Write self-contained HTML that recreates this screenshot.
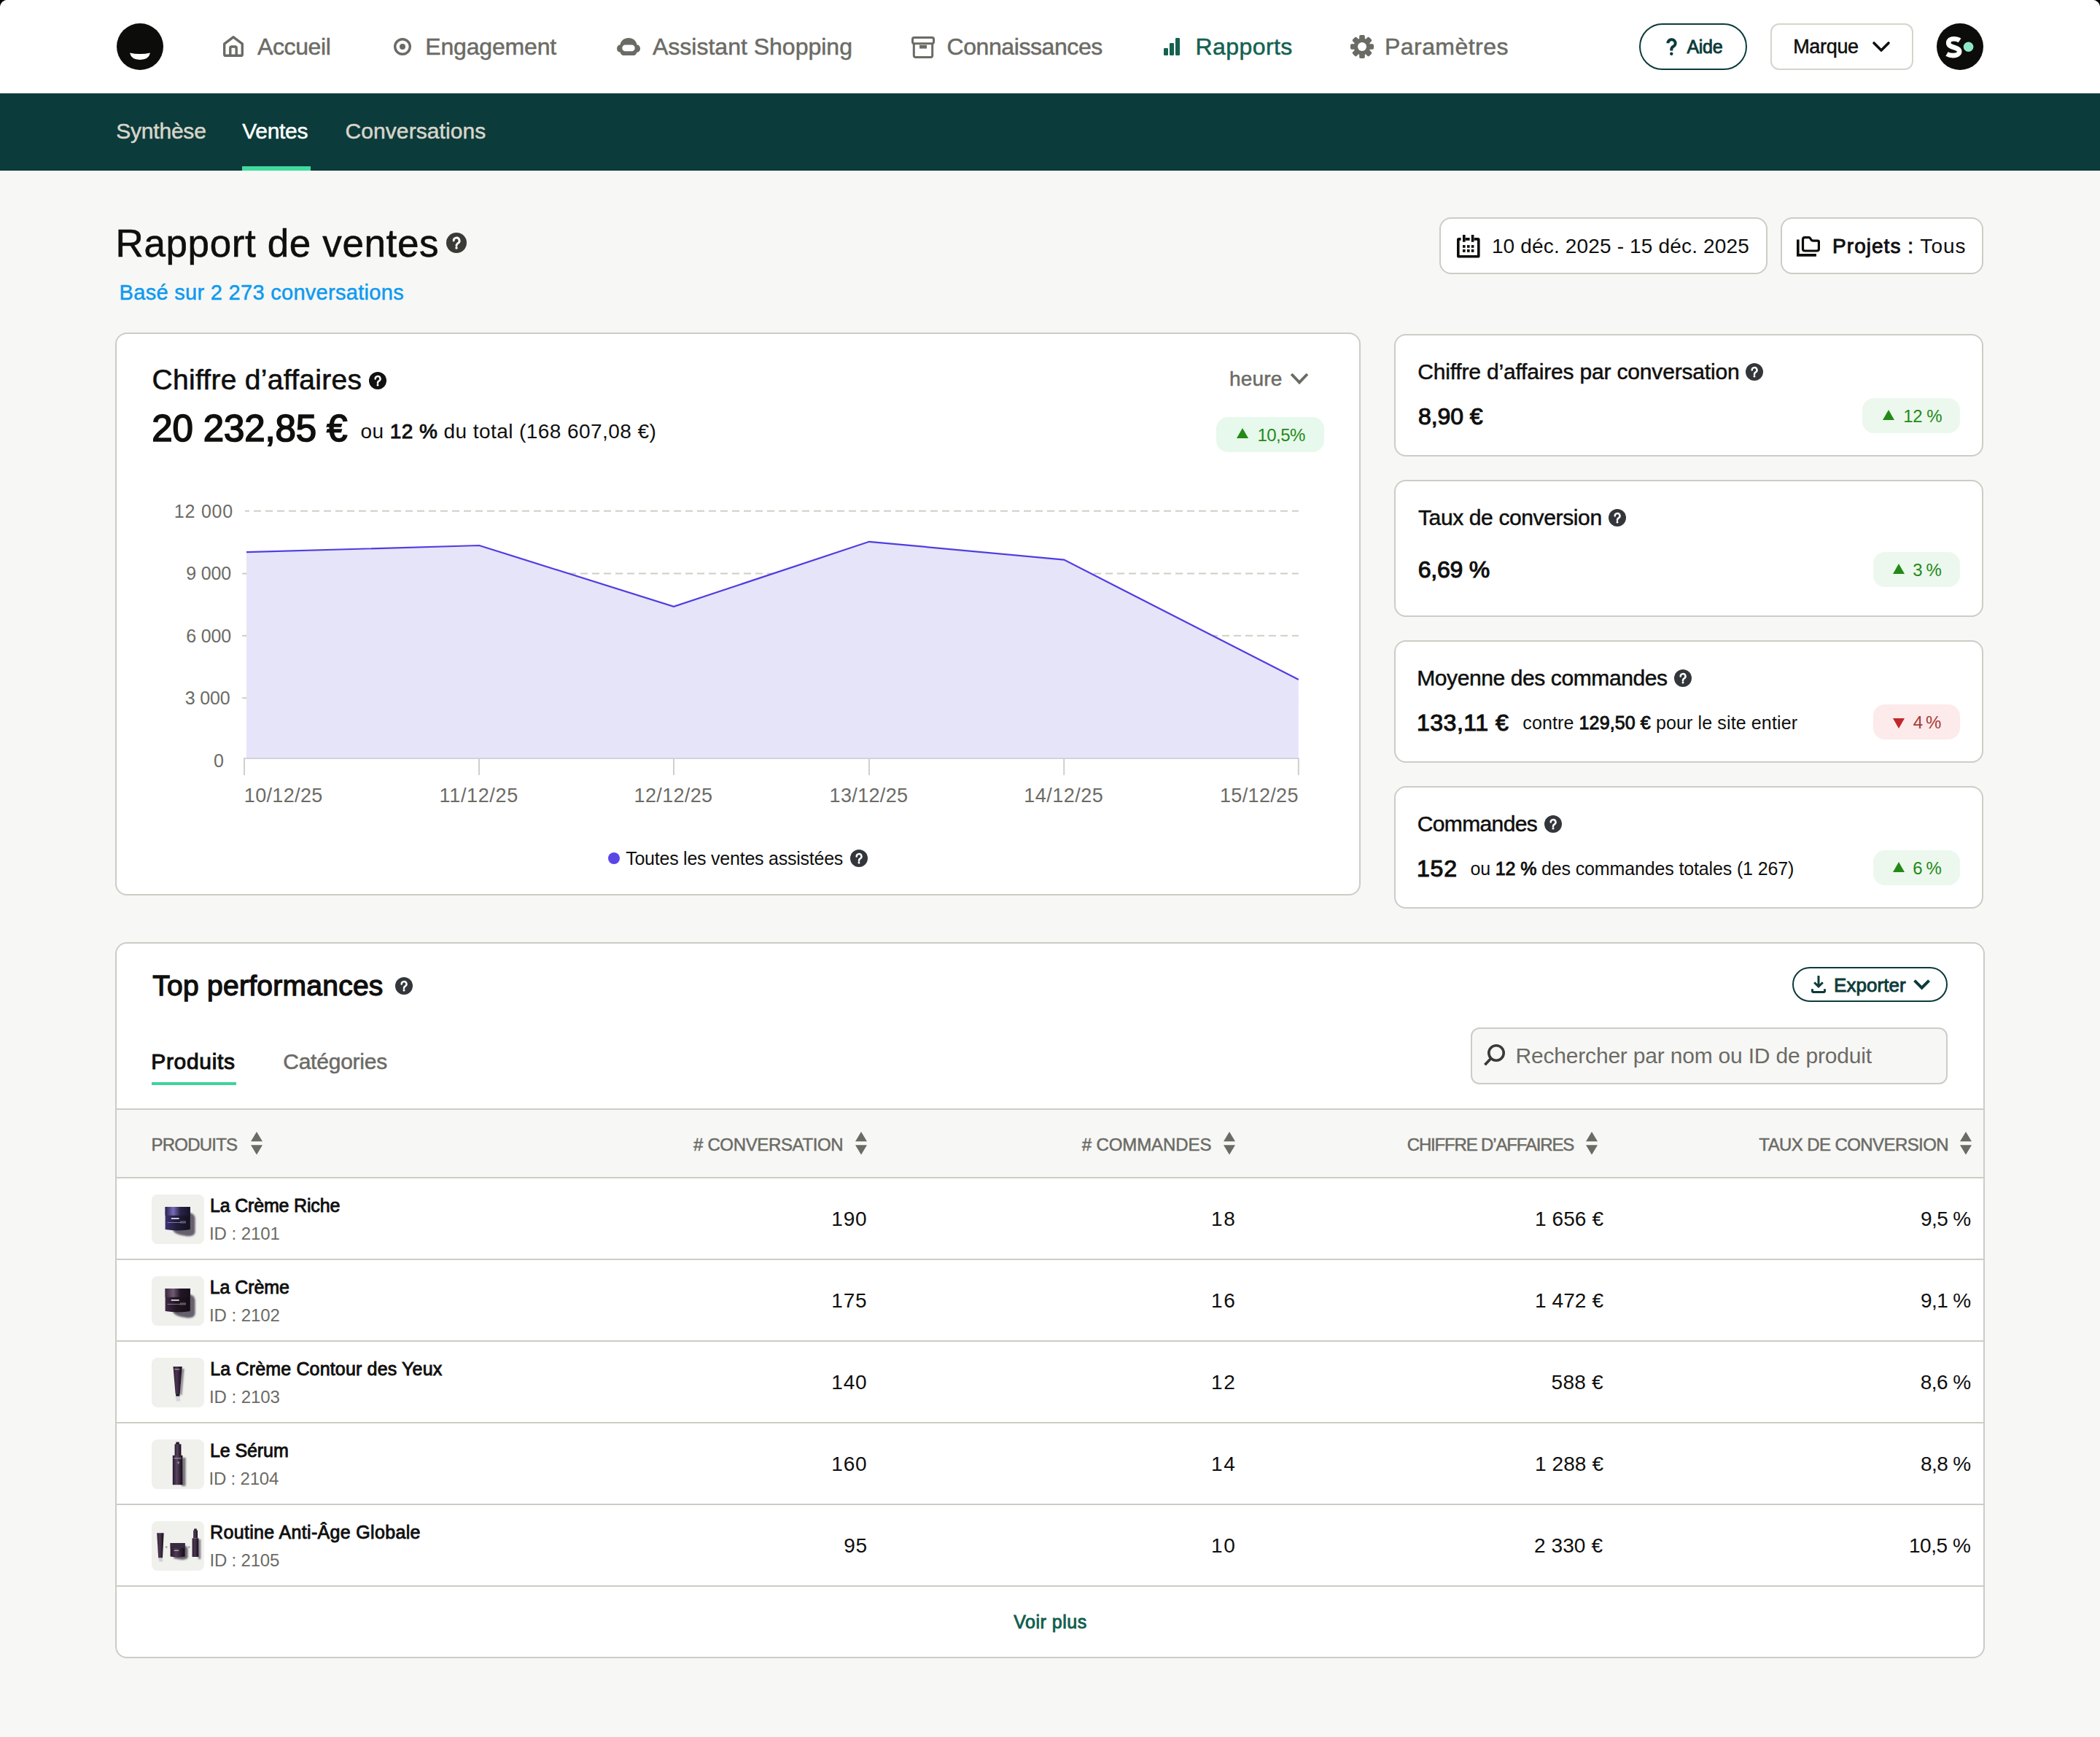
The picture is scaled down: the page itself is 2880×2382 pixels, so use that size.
<!DOCTYPE html>
<html><head><meta charset="utf-8"><title>Rapport de ventes</title>
<style>
html,body{margin:0;padding:0;background:#000;overflow:hidden;}
#root{position:relative;width:1440px;height:1191px;zoom:2;background:#f7f7f5;overflow:hidden;border-radius:5px 5px 0 0;font-family:"Liberation Sans",sans-serif;}
@media (max-width:2000px){#root{zoom:1;}}
.t{position:absolute;line-height:1;white-space:nowrap;}
.b{position:absolute;}
.i{position:absolute;overflow:visible;}
b{font-weight:400;-webkit-text-stroke:.45px currentColor;}
</style></head><body><div id="root">
<div class="b" style="left:0px;top:0px;width:1440px;height:64px;background:#fff;"></div>
<svg class="i" style="left:80px;top:16px;width:32px;height:32px;" viewBox="0 0 32 32"><circle cx="16" cy="16" r="16" fill="#0c0c0a"/><path d="M9 20.3 Q16 21.8 23 20.3 Q22 25 16 25 Q10 25 9 20.3Z" fill="#fff"/></svg>
<svg class="i" style="left:153px;top:24.5px;width:14px;height:14.5px;" viewBox="0 0 14 14.5"><g fill="none" stroke="#6b6b65" stroke-width="1.7" stroke-linejoin="round"><path d="M7 0.9 L0.85 5.6 V12.7 Q0.85 13.65 1.8 13.65 H12.2 Q13.15 13.65 13.15 12.7 V5.6 Z"/><path d="M4.9 13.6 V8.4 Q4.9 7.5 5.8 7.5 H8.2 Q9.1 7.5 9.1 8.4 V13.6"/></g></svg>
<svg class="i" style="left:270px;top:26px;width:12px;height:12px;" viewBox="0 0 12 12"><circle cx="6" cy="6" r="5.15" fill="none" stroke="#6b6b65" stroke-width="1.7"/><circle cx="6" cy="6" r="2" fill="#6b6b65"/></svg>
<svg class="i" style="left:423px;top:26px;width:16px;height:12px;" viewBox="0 0 16 12"><path fill="#6b6b65" fill-rule="evenodd" d="M2.2 4.8 C2.7 1.8 5 0 8 0 C11 0 13.3 1.8 13.8 4.8 H13.9 A2.1 2.55 0 0 1 13.9 9.9 H13.7 C13.4 11.2 12.6 12 11.5 12 H4.5 C3.4 12 2.6 11.2 2.3 9.9 H2.1 A2.1 2.55 0 0 1 2.1 4.8 Z M5.8 4.8 H10.2 A2.15 2.15 0 0 1 10.2 9.1 H5.8 A2.15 2.15 0 0 1 5.8 4.8 Z"/></svg>
<svg class="i" style="left:625px;top:25px;width:16px;height:15px;" viewBox="0 0 16 15"><g fill="none" stroke="#6b6b65" stroke-width="1.5"><rect x="0.75" y="0.75" width="14.5" height="4.1" rx="1.1"/><path d="M1.65 4.85 V13 Q1.65 14.25 2.9 14.25 H13.1 Q14.35 14.25 14.35 13 V4.85"/></g><rect x="5.5" y="5.9" width="5" height="2.4" fill="#6b6b65"/></svg>
<svg class="i" style="left:798px;top:26px;width:11px;height:12px;" viewBox="0 0 11 12"><g fill="#14614f"><rect x="0" y="7" width="3" height="5" rx=".6"/><rect x="4" y="3.5" width="3" height="8.5" rx=".6"/><rect x="8" y="0" width="3" height="12" rx=".6"/></g></svg>
<svg class="i" style="left:926px;top:24px;width:16px;height:16px;" viewBox="0 0 16 16"><g fill="#6b6b65"><rect x="6.1" y="0" width="3.8" height="4" rx="0.9" transform="rotate(0 8 8)"/><rect x="6.1" y="0" width="3.8" height="4" rx="0.9" transform="rotate(45 8 8)"/><rect x="6.1" y="0" width="3.8" height="4" rx="0.9" transform="rotate(90 8 8)"/><rect x="6.1" y="0" width="3.8" height="4" rx="0.9" transform="rotate(135 8 8)"/><rect x="6.1" y="0" width="3.8" height="4" rx="0.9" transform="rotate(180 8 8)"/><rect x="6.1" y="0" width="3.8" height="4" rx="0.9" transform="rotate(225 8 8)"/><rect x="6.1" y="0" width="3.8" height="4" rx="0.9" transform="rotate(270 8 8)"/><rect x="6.1" y="0" width="3.8" height="4" rx="0.9" transform="rotate(315 8 8)"/><circle cx="8" cy="8" r="5.7"/></g><circle cx="8" cy="8" r="3" fill="#fff"/></svg>
<div class="t" id="n1" style="top:23.96px;font-size:16px;color:#6b6b65;letter-spacing:-0.179px;left:176.45px;-webkit-text-stroke:0.25px currentColor;">Accueil</div>
<div class="t" id="n2" style="top:23.96px;font-size:16px;color:#6b6b65;letter-spacing:-0.083px;left:291.62px;-webkit-text-stroke:0.25px currentColor;">Engagement</div>
<div class="t" id="n3" style="top:23.96px;font-size:16px;color:#6b6b65;left:447.50px;-webkit-text-stroke:0.25px currentColor;">Assistant Shopping</div>
<div class="t" id="n4" style="top:23.96px;font-size:16px;color:#6b6b65;letter-spacing:-0.208px;left:649.25px;-webkit-text-stroke:0.25px currentColor;">Connaissances</div>
<div class="t" id="n5" style="top:23.96px;font-size:16px;color:#14614f;letter-spacing:0.214px;left:819.75px;-webkit-text-stroke:0.25px currentColor;">Rapports</div>
<div class="t" id="n6" style="top:23.96px;font-size:16px;color:#6b6b65;letter-spacing:0.222px;left:949.50px;-webkit-text-stroke:0.25px currentColor;">Paramètres</div>
<div class="b" style="left:1124px;top:16px;width:74px;height:32px;box-sizing:border-box;border:1px solid #0b3b3a;border-radius:16px;background:#fff;"></div>
<svg class="i" style="left:1142.3px;top:26px;width:7.3px;height:12px;" viewBox="0 0 7.3 12"><path d="M1.2 3.6 A2.55 2.55 0 1 1 4.9 5.9 Q3.65 6.6 3.65 7.9 V8.8" fill="none" stroke="#0b3b3a" stroke-width="2"/><circle cx="3.65" cy="10.9" r="1.1" fill="#0b3b3a"/></svg>
<div class="t" id="aide" style="top:25.82px;font-size:12.5px;color:#0b3b3a;-webkit-text-stroke:0.43px currentColor;letter-spacing:-0.129px;left:1156.70px;">Aide</div>
<div class="b" style="left:1214px;top:16px;width:98px;height:32px;box-sizing:border-box;border:1px solid #d5d4cc;border-radius:6px;background:#fff;"></div>
<div class="t" id="marque" style="top:25.37px;font-size:13.5px;color:#0f0f0e;letter-spacing:-0.16px;left:1229.60px;-webkit-text-stroke:0.25px currentColor;">Marque</div>
<svg class="i" style="left:1284px;top:28.5px;width:12px;height:7px;" viewBox="0 0 12 7"><path d="M1 1 L6 6 L11 1" fill="none" stroke="#0f0f0e" stroke-width="1.8" stroke-linecap="round" stroke-linejoin="round"/></svg>
<svg class="i" style="left:1328px;top:16px;width:32px;height:32px;" viewBox="0 0 32 32"><circle cx="16" cy="16" r="16" fill="#0c0c0a"/><path d="M15.8 11.7 C14.7 10.95 13.1 10.65 11.7 10.65 C9.7 10.65 8.1 11.6 8.1 13.5 C8.1 17.1 15.6 15.9 15.6 19.3 C15.6 21.1 13.7 22.05 11.3 22.05 C9.8 22.05 8.2 21.7 7 21" fill="none" stroke="#fff" stroke-width="3.3"/><circle cx="21.8" cy="16.1" r="3.4" fill="#8fe8c5"/></svg>
<div class="b" style="left:0px;top:64px;width:1440px;height:53px;background:#0b3b3a;"></div>
<div class="t" id="s1" style="top:82.60px;font-size:15px;color:#d8d5cb;letter-spacing:-0.107px;left:79.62px;-webkit-text-stroke:0.25px currentColor;">Synthèse</div>
<div class="t" id="s2" style="top:82.60px;font-size:15px;color:#ffffff;letter-spacing:-0.15px;left:166.12px;-webkit-text-stroke:0.25px currentColor;">Ventes</div>
<div class="t" id="s3" style="top:82.60px;font-size:15px;color:#d8d5cb;letter-spacing:0.042px;left:236.75px;-webkit-text-stroke:0.25px currentColor;">Conversations</div>
<div class="b" style="left:166px;top:114px;width:47px;height:3px;background:#3fdc9e;"></div>
<div class="t" id="title" style="top:153.57px;font-size:26.5px;color:#0f0f0e;letter-spacing:0.31px;left:79.25px;-webkit-text-stroke:0.3px currentColor;">Rapport de ventes</div>
<svg class="i" style="left:306px;top:159.6px;width:14px;height:14px;" viewBox="0 0 12 12"><circle cx="6" cy="6" r="6" fill="#3a3a36"/><path d="M4.35 4.75a1.7 1.7 0 1 1 2.55 1.45c-.55.33-.9.62-.9 1.25v.25" fill="none" stroke="#fff" stroke-width="1.25" stroke-linecap="round"/><circle cx="6" cy="9.05" r=".75" fill="#fff"/></svg>
<div class="t" id="sub" style="top:193.43px;font-size:14.5px;color:#0d9af0;letter-spacing:0.148px;left:81.80px;-webkit-text-stroke:0.25px currentColor;">Basé sur 2 273 conversations</div>
<div class="b" style="left:987px;top:149px;width:225px;height:39px;box-sizing:border-box;border:1px solid #cdccc5;border-radius:8px;background:#fff;"></div>
<svg class="i" style="left:999px;top:161px;width:16px;height:16px;" viewBox="0 0 16 16"><g fill="#0c0c0a"><path d="M0 3.3 Q0 2 1.3 2 H2.8 V3.9 H1.8 V14 H14 V3.9 H11.8 V2 H14.5 Q15.8 2 15.8 3.3 V14.5 Q15.8 15.8 14.5 15.8 H1.3 Q0 15.8 0 14.5 Z"/><rect x="4" y="0" width="1.8" height="4.9"/><rect x="9.9" y="0" width="1.8" height="4.9"/><rect x="5.8" y="2" width="3" height="1.9"/><rect x="4" y="7.05" width="1.8" height="1.85"/><rect x="7" y="7.05" width="1.8" height="1.85"/><rect x="9.9" y="7.05" width="1.8" height="1.85"/><rect x="4" y="10" width="1.8" height="1.9"/><rect x="7" y="10" width="1.8" height="1.9"/><rect x="9.9" y="10" width="1.8" height="1.9"/></g></svg>
<div class="t" id="date" style="top:162.15px;font-size:14px;color:#0f0f0e;letter-spacing:0.081px;left:1022.95px;">10 déc. 2025 - 15 déc. 2025</div>
<div class="b" style="left:1221px;top:149px;width:139px;height:39px;box-sizing:border-box;border:1px solid #cdccc5;border-radius:8px;background:#fff;"></div>
<svg class="i" style="left:1232px;top:162px;width:16px;height:14px;" viewBox="0 0 16 14"><path d="M4.25 2.2 Q4.25 0.8 5.65 0.8 H8.3 Q9 0.8 9.4 1.5 L9.9 2.3 Q10.4 3.1 11.3 3.1 H14.4 Q15.2 3.1 15.2 3.9 V8.6 Q15.2 10 13.8 10 H5.65 Q4.25 10 4.25 8.6 Z" fill="none" stroke="#0c0c0a" stroke-width="1.6"/><path d="M0 2.2 H1.8 V12 H13.45 V13.9 H0 Z" fill="#0c0c0a"/></svg>
<div class="t" id="proj" style="top:162.15px;font-size:14px;color:#0f0f0e;letter-spacing:0.514px;left:1256.55px;"><b>Projets :</b> Tous</div>
<div class="b" style="left:79px;top:228px;width:854px;height:386px;box-sizing:border-box;border:1px solid #cdccc5;border-radius:8px;background:#fff;"></div>
<div class="t" id="ca" style="top:250.39px;font-size:19.5px;color:#0f0f0e;letter-spacing:0.147px;left:104.25px;-webkit-text-stroke:0.3px currentColor;">Chiffre d’affaires</div>
<svg class="i" style="left:253px;top:255px;width:12px;height:12px;" viewBox="0 0 12 12"><circle cx="6" cy="6" r="6" fill="#111"/><path d="M4.35 4.75a1.7 1.7 0 1 1 2.55 1.45c-.55.33-.9.62-.9 1.25v.25" fill="none" stroke="#fff" stroke-width="1.25" stroke-linecap="round"/><circle cx="6" cy="9.05" r=".75" fill="#fff"/></svg>
<div class="t" id="caval" style="top:280.91px;font-size:25.5px;color:#0f0f0e;-webkit-text-stroke:0.87px currentColor;letter-spacing:-0.07px;left:104.15px;">20 232,85 €</div>
<div class="t" id="catot" style="top:289.15px;font-size:14px;color:#0f0f0e;letter-spacing:0.217px;left:247.25px;">ou <b>12 %</b> du total (168 607,08 €)</div>
<div class="t" id="heure" style="top:253.15px;font-size:14px;color:#6b6b65;letter-spacing:0.1px;left:843.00px;-webkit-text-stroke:0.25px currentColor;">heure</div>
<svg class="i" style="left:885px;top:256px;width:12px;height:8px;" viewBox="0 0 12 8"><path d="M1.2 1.2 L6 6.2 L10.8 1.2" fill="none" stroke="#6b6b65" stroke-width="1.9" stroke-linecap="square"/></svg>
<div class="b" style="left:834px;top:286px;width:74px;height:24px;background:#e7f8ec;border-radius:8px;"></div>
<svg class="i" style="left:848px;top:293.7px;width:8px;height:7px;" viewBox="0 0 8 7"><path d="M4 0 L8 7 H0Z" fill="#238a17"/></svg>
<div class="t" id="b1" style="top:292.34px;font-size:12px;color:#238a17;letter-spacing:-0.275px;left:862.25px;">10,5%</div>
<svg class="i" style="left:0;top:0;width:1440px;height:700px" viewBox="0 0 1440 700"><line x1="168" y1="350.4" x2="890.4" y2="350.4" stroke="#cfcec6" stroke-width="1" stroke-dasharray="5 3" stroke-dashoffset="2"/><line x1="168" y1="393.3" x2="890.4" y2="393.3" stroke="#cfcec6" stroke-width="1" stroke-dasharray="5 3" stroke-dashoffset="2"/><line x1="168" y1="435.9" x2="890.4" y2="435.9" stroke="#cfcec6" stroke-width="1" stroke-dasharray="5 3" stroke-dashoffset="2"/><line x1="168" y1="478.6" x2="890.4" y2="478.6" stroke="#cfcec6" stroke-width="1" stroke-dasharray="5 3" stroke-dashoffset="2"/><polygon points="169,520 169,378.6 328.6,374 462,415.9 596,371.4 729.6,383.8 890.4,466 890.4,520" fill="#e6e4f8"/><polyline points="169,378.6 328.6,374 462,415.9 596,371.4 729.6,383.8 890.4,466" fill="none" stroke="#4f3de2" stroke-width="1.1"/><line x1="167" y1="520" x2="890.9" y2="520" stroke="#d2d2de" stroke-width="1"/><line x1="167.5" y1="520.5" x2="167.5" y2="531.5" stroke="#d0cfc8" stroke-width="1"/><line x1="328.5" y1="520.5" x2="328.5" y2="531.5" stroke="#d0cfc8" stroke-width="1"/><line x1="462" y1="520.5" x2="462" y2="531.5" stroke="#d0cfc8" stroke-width="1"/><line x1="596" y1="520.5" x2="596" y2="531.5" stroke="#d0cfc8" stroke-width="1"/><line x1="729.6" y1="520.5" x2="729.6" y2="531.5" stroke="#d0cfc8" stroke-width="1"/><line x1="890.4" y1="520.5" x2="890.4" y2="531.5" stroke="#d0cfc8" stroke-width="1"/><line x1="166" y1="393.3" x2="169" y2="393.3" stroke="#d0cfc8" stroke-width="1"/><line x1="166" y1="435.9" x2="169" y2="435.9" stroke="#d0cfc8" stroke-width="1"/><line x1="166" y1="478.6" x2="169" y2="478.6" stroke="#d0cfc8" stroke-width="1"/></svg>
<div class="t" id="y1" style="top:344.42px;font-size:12.5px;color:#6b6b65;letter-spacing:0.4px;right:1280.00px;">12 000</div>
<div class="t" id="t137cb48a" style="top:387.02px;font-size:12.5px;color:#6b6b65;letter-spacing:-0.075px;right:1281.45px;">9 000</div>
<div class="t" id="t565c6882" style="top:429.82px;font-size:12.5px;color:#6b6b65;letter-spacing:-0.075px;right:1281.45px;">6 000</div>
<div class="t" id="t5d8c16ff" style="top:472.52px;font-size:12.5px;color:#6b6b65;letter-spacing:-0.075px;right:1282.25px;">3 000</div>
<div class="t" id="t58d83ec4" style="top:515.32px;font-size:12.5px;color:#6b6b65;right:1286.50px;">0</div>
<div class="t" id="x1" style="top:539.07px;font-size:13.5px;color:#6b6b65;letter-spacing:0.172px;left:167.40px;">10/12/25</div>
<div class="t" id="t9c1f817a" style="top:539.07px;font-size:13.5px;color:#6b6b65;letter-spacing:0.318px;left:328.35px;transform:translateX(-50%);">11/12/25</div>
<div class="t" id="t65c3688e" style="top:539.07px;font-size:13.5px;color:#6b6b65;letter-spacing:0.176px;left:461.75px;transform:translateX(-50%);">12/12/25</div>
<div class="t" id="te7cf4b01" style="top:539.07px;font-size:13.5px;color:#6b6b65;letter-spacing:0.176px;left:595.75px;transform:translateX(-50%);">13/12/25</div>
<div class="t" id="td51dcc60" style="top:539.07px;font-size:13.5px;color:#6b6b65;letter-spacing:0.245px;left:729.40px;transform:translateX(-50%);">14/12/25</div>
<div class="t" id="t55d1722b" style="top:539.07px;font-size:13.5px;color:#6b6b65;letter-spacing:0.171px;right:549.60px;">15/12/25</div>
<div class="b" style="left:417px;top:584.4px;width:8px;height:8px;background:#5a46e6;border-radius:50%;"></div>
<div class="t" id="leg" style="top:582.72px;font-size:12.5px;color:#0f0f0e;letter-spacing:-0.119px;left:429.10px;">Toutes les ventes assistées</div>
<svg class="i" style="left:583px;top:582.5px;width:12px;height:12px;" viewBox="0 0 12 12"><circle cx="6" cy="6" r="6" fill="#33363b"/><path d="M4.35 4.75a1.7 1.7 0 1 1 2.55 1.45c-.55.33-.9.62-.9 1.25v.25" fill="none" stroke="#fff" stroke-width="1.25" stroke-linecap="round"/><circle cx="6" cy="9.05" r=".75" fill="#fff"/></svg>
<div class="b" style="left:956px;top:229px;width:404px;height:84px;box-sizing:border-box;border:1px solid #cdccc5;border-radius:8px;background:#fff;"></div>
<div class="t" id="ta4232cba" style="top:247.70px;font-size:15px;color:#0f0f0e;letter-spacing:-0.088px;left:972.10px;-webkit-text-stroke:0.25px currentColor;">Chiffre d’affaires par conversation</div>
<svg class="i" style="left:1197.2px;top:249.2px;width:12px;height:12px;" viewBox="0 0 12 12"><circle cx="6" cy="6" r="6" fill="#33363b"/><path d="M4.35 4.75a1.7 1.7 0 1 1 2.55 1.45c-.55.33-.9.62-.9 1.25v.25" fill="none" stroke="#fff" stroke-width="1.25" stroke-linecap="round"/><circle cx="6" cy="9.05" r=".75" fill="#fff"/></svg>
<div class="t" id="t24fc202e" style="top:277.46px;font-size:16px;color:#0f0f0e;-webkit-text-stroke:0.54px currentColor;letter-spacing:-0.04px;left:972.50px;">8,90 €</div>
<div class="b" style="left:1277px;top:273px;width:67px;height:24px;background:#ecf8ee;border-radius:8px;"></div>
<svg class="i" style="left:1291px;top:281px;width:8px;height:7px;" viewBox="0 0 8 7"><path d="M4 0 L8 7 H0Z" fill="#238a17"/></svg>
<div class="t" id="t31ce87d0" style="top:279.44px;font-size:12px;color:#238a17;letter-spacing:-0.204px;left:1305.10px;">12 %</div>
<div class="b" style="left:956px;top:329px;width:404px;height:94px;box-sizing:border-box;border:1px solid #cdccc5;border-radius:8px;background:#fff;"></div>
<div class="t" id="t11be38d4" style="top:347.70px;font-size:15px;color:#0f0f0e;letter-spacing:-0.189px;left:972.50px;-webkit-text-stroke:0.25px currentColor;">Taux de conversion</div>
<svg class="i" style="left:1103px;top:349.2px;width:12px;height:12px;" viewBox="0 0 12 12"><circle cx="6" cy="6" r="6" fill="#33363b"/><path d="M4.35 4.75a1.7 1.7 0 1 1 2.55 1.45c-.55.33-.9.62-.9 1.25v.25" fill="none" stroke="#fff" stroke-width="1.25" stroke-linecap="round"/><circle cx="6" cy="9.05" r=".75" fill="#fff"/></svg>
<div class="t" id="t1318b4bb" style="top:382.46px;font-size:16px;color:#0f0f0e;-webkit-text-stroke:0.54px currentColor;letter-spacing:-0.1px;left:972.35px;">6,69 %</div>
<div class="b" style="left:1284.4px;top:378.4px;width:59.6px;height:24px;background:#ecf8ee;border-radius:8px;"></div>
<svg class="i" style="left:1298px;top:386.4px;width:8px;height:7px;" viewBox="0 0 8 7"><path d="M4 0 L8 7 H0Z" fill="#238a17"/></svg>
<div class="t" id="t727fd282" style="top:384.84px;font-size:12px;color:#238a17;letter-spacing:-0.4px;left:1311.60px;">3 %</div>
<div class="b" style="left:956px;top:439px;width:404px;height:84px;box-sizing:border-box;border:1px solid #cdccc5;border-radius:8px;background:#fff;"></div>
<div class="t" id="t9376543f" style="top:457.70px;font-size:15px;color:#0f0f0e;letter-spacing:-0.2px;left:971.60px;-webkit-text-stroke:0.25px currentColor;">Moyenne des commandes</div>
<svg class="i" style="left:1148px;top:459.2px;width:12px;height:12px;" viewBox="0 0 12 12"><circle cx="6" cy="6" r="6" fill="#33363b"/><path d="M4.35 4.75a1.7 1.7 0 1 1 2.55 1.45c-.55.33-.9.62-.9 1.25v.25" fill="none" stroke="#fff" stroke-width="1.25" stroke-linecap="round"/><circle cx="6" cy="9.05" r=".75" fill="#fff"/></svg>
<div class="t" id="t6aae65fb" style="top:487.46px;font-size:16px;color:#0f0f0e;-webkit-text-stroke:0.54px currentColor;letter-spacing:0.256px;left:971.50px;">133,11 €</div>
<div class="t" id="t94867053" style="top:489.42px;font-size:12.5px;color:#0f0f0e;letter-spacing:0.062px;left:1044.15px;">contre <b>129,50 €</b> pour le site entier</div>
<div class="b" style="left:1284.4px;top:483px;width:59.6px;height:24px;background:#fdeaea;border-radius:8px;"></div>
<svg class="i" style="left:1298px;top:492.6px;width:8px;height:7px;" viewBox="0 0 8 7"><path d="M0 0 H8 L4 7Z" fill="#c0282a"/></svg>
<div class="t" id="taf74cc3e" style="top:489.44px;font-size:12px;color:#a83a3a;letter-spacing:-0.65px;left:1311.85px;">4 %</div>
<div class="b" style="left:956px;top:539px;width:404px;height:84px;box-sizing:border-box;border:1px solid #cdccc5;border-radius:8px;background:#fff;"></div>
<div class="t" id="ta5db2e19" style="top:557.70px;font-size:15px;color:#0f0f0e;letter-spacing:-0.308px;left:971.85px;-webkit-text-stroke:0.25px currentColor;">Commandes</div>
<svg class="i" style="left:1059px;top:559.1999999999999px;width:12px;height:12px;" viewBox="0 0 12 12"><circle cx="6" cy="6" r="6" fill="#33363b"/><path d="M4.35 4.75a1.7 1.7 0 1 1 2.55 1.45c-.55.33-.9.62-.9 1.25v.25" fill="none" stroke="#fff" stroke-width="1.25" stroke-linecap="round"/><circle cx="6" cy="9.05" r=".75" fill="#fff"/></svg>
<div class="t" id="tdd738dce" style="top:587.46px;font-size:16px;color:#0f0f0e;-webkit-text-stroke:0.54px currentColor;letter-spacing:0.4px;left:971.50px;">152</div>
<div class="t" id="t811cad77" style="top:589.42px;font-size:12.5px;color:#0f0f0e;letter-spacing:-0.071px;left:1008.25px;">ou <b>12 %</b> des commandes totales (1 267)</div>
<div class="b" style="left:1284.4px;top:583px;width:59.6px;height:24px;background:#ecf8ee;border-radius:8px;"></div>
<svg class="i" style="left:1298px;top:591px;width:8px;height:7px;" viewBox="0 0 8 7"><path d="M4 0 L8 7 H0Z" fill="#238a17"/></svg>
<div class="t" id="t14308f46" style="top:589.44px;font-size:12px;color:#238a17;letter-spacing:-0.4px;left:1311.60px;">6 %</div>
<div class="b" style="left:79px;top:646px;width:1282px;height:491px;box-sizing:border-box;border:1px solid #cdccc5;border-radius:8px;background:#fff;"></div>
<div class="t" id="tp" style="top:666.09px;font-size:19.5px;color:#0f0f0e;-webkit-text-stroke:0.66px currentColor;letter-spacing:0.134px;left:104.60px;">Top performances</div>
<svg class="i" style="left:271px;top:670px;width:12px;height:12px;" viewBox="0 0 12 12"><circle cx="6" cy="6" r="6" fill="#33363b"/><path d="M4.35 4.75a1.7 1.7 0 1 1 2.55 1.45c-.55.33-.9.62-.9 1.25v.25" fill="none" stroke="#fff" stroke-width="1.25" stroke-linecap="round"/><circle cx="6" cy="9.05" r=".75" fill="#fff"/></svg>
<div class="b" style="left:1229px;top:663.2px;width:106.6px;height:23.6px;box-sizing:border-box;border:1px solid #0b3b3a;border-radius:12px;background:#fff;"></div>
<svg class="i" style="left:1241.3px;top:669px;width:11px;height:12px;" viewBox="0 0 11 12"><g fill="none" stroke="#0b3b3a" stroke-width="1.5"><path d="M5.5 0 V7.4 M2.6 4.6 L5.5 7.5 L8.4 4.6"/><path d="M1.25 9.1 V10.5 Q1.25 11.25 2 11.25 H9 Q9.75 11.25 9.75 10.5 V9.1"/></g></svg>
<div class="t" id="exp" style="top:669.00px;font-size:13px;color:#0b3b3a;-webkit-text-stroke:0.44px currentColor;letter-spacing:0.032px;left:1257.50px;">Exporter</div>
<svg class="i" style="left:1312.2px;top:671.5px;width:11.6px;height:7px;" viewBox="0 0 11.6 7"><path d="M0.8 0.8 L5.8 5.8 L10.8 0.8" fill="none" stroke="#0b3b3a" stroke-width="2"/></svg>
<div class="b" style="left:1008.3px;top:704.3px;width:327.3px;height:39px;box-sizing:border-box;border:1px solid #cdccc5;border-radius:6px;background:#f7f7f5;"></div>
<svg class="i" style="left:1017px;top:716px;width:15px;height:15px;" viewBox="0 0 15 15"><circle cx="9" cy="6" r="5.1" fill="none" stroke="#3a3a36" stroke-width="1.8"/><path d="M5.6 9.5 L1.2 14.1" stroke="#3a3a36" stroke-width="1.9"/></svg>
<div class="t" id="search" style="top:716.60px;font-size:15px;color:#6b6b65;letter-spacing:-0.1px;left:1039.30px;">Rechercher par nom ou ID de produit</div>
<div class="t" id="tab1" style="top:720.70px;font-size:15px;color:#0f0f0e;-webkit-text-stroke:0.51px currentColor;letter-spacing:0.34px;left:103.60px;">Produits</div>
<div class="b" style="left:104px;top:742px;width:58px;height:2px;background:#3fd39b;"></div>
<div class="t" id="tab2" style="top:720.70px;font-size:15px;color:#6b6b65;letter-spacing:-0.111px;left:194.10px;-webkit-text-stroke:0.25px currentColor;">Catégories</div>
<div class="b" style="left:80px;top:760px;width:1280px;height:48px;background:#f7f7f5;border-top:1px solid #cdccc5;border-bottom:1px solid #cdccc5;box-sizing:border-box;"></div>
<div class="t" id="h1" style="top:778.84px;font-size:12px;color:#6b6b65;letter-spacing:-0.387px;left:103.75px;-webkit-text-stroke:0.25px currentColor;">PRODUITS</div>
<svg class="i" style="left:172px;top:776px;width:8px;height:16px;" viewBox="0 0 8 16"><path d="M4 0 L8 6.6 H0Z M0 9.1 H8 L4 15.7Z" fill="#6b6b65"/></svg>
<div class="t" id="h2" style="top:778.84px;font-size:12px;color:#6b6b65;letter-spacing:-0.18px;right:861.85px;-webkit-text-stroke:0.25px currentColor;"># CONVERSATION</div>
<svg class="i" style="left:586.6px;top:776px;width:8px;height:16px;" viewBox="0 0 8 16"><path d="M4 0 L8 6.6 H0Z M0 9.1 H8 L4 15.7Z" fill="#6b6b65"/></svg>
<div class="t" id="h3" style="top:778.84px;font-size:12px;color:#6b6b65;letter-spacing:-0.05px;right:609.35px;-webkit-text-stroke:0.25px currentColor;"># COMMANDES</div>
<svg class="i" style="left:839px;top:776px;width:8px;height:16px;" viewBox="0 0 8 16"><path d="M4 0 L8 6.6 H0Z M0 9.1 H8 L4 15.7Z" fill="#6b6b65"/></svg>
<div class="t" id="h4" style="top:778.84px;font-size:12px;color:#6b6b65;letter-spacing:-0.583px;right:360.95px;-webkit-text-stroke:0.25px currentColor;">CHIFFRE D’AFFAIRES</div>
<svg class="i" style="left:1087.6px;top:776px;width:8px;height:16px;" viewBox="0 0 8 16"><path d="M4 0 L8 6.6 H0Z M0 9.1 H8 L4 15.7Z" fill="#6b6b65"/></svg>
<div class="t" id="h5" style="top:778.84px;font-size:12px;color:#6b6b65;letter-spacing:-0.295px;right:104.00px;-webkit-text-stroke:0.25px currentColor;">TAUX DE CONVERSION</div>
<svg class="i" style="left:1344.2px;top:776px;width:8px;height:16px;" viewBox="0 0 8 16"><path d="M4 0 L8 6.6 H0Z M0 9.1 H8 L4 15.7Z" fill="#6b6b65"/></svg>
<div class="b" style="left:104px;top:819.1px;width:36px;height:34px;background:#f0f0ec;border-radius:4px;"></div>
<svg class="i" style="left:104px;top:819.1px;width:36px;height:34px;" viewBox="0 0 36 34"><defs><filter id="bl" x="-50%" y="-50%" width="200%" height="200%"><feGaussianBlur stdDeviation="0.45"/></filter><linearGradient id="Ljar1" x1="0" x2="1"><stop offset="0" stop-color="#29224e"/><stop offset=".32" stop-color="#7a6bb8"/><stop offset=".6" stop-color="#2a2447"/><stop offset="1" stop-color="#16132a"/></linearGradient><linearGradient id="Bjar1" x1="0" x2="1"><stop offset="0" stop-color="#3d3172"/><stop offset=".45" stop-color="#211c3b"/><stop offset="1" stop-color="#14111f"/></linearGradient></defs><path d="M22 11.8 Q29.6 12.2 29.8 16.5 V25.8 Q29.4 28.9 25 28.6 Q17 28.2 14.5 24.8 Z" fill="#66606c" filter="url(#bl)"/><path d="M9.3 8.5 H26.4 V24 Q17.85 25.4 9.3 24 Z" fill="url(#Bjar1)"/><rect x="9.3" y="8.5" width="17.1" height="5.9" fill="url(#Ljar1)"/><rect x="13.4" y="16" width="5.4" height="1" fill="#e8e4f0" opacity=".85"/><rect x="10.8" y="19" width="9" height=".4" fill="#d8d4e0" opacity=".6"/><rect x="19.5" y="18.2" width="4" height="1.6" fill="#d8d4e0" opacity=".35"/></svg>
<div class="t" id="te92520b5" style="top:820.62px;font-size:12.5px;color:#0f0f0e;-webkit-text-stroke:0.43px currentColor;letter-spacing:-0.09px;left:144.00px;">La Crème Riche</div>
<div class="t" id="t3f57fa32" style="top:839.84px;font-size:12px;color:#6b6b65;letter-spacing:-0.034px;left:143.50px;">ID : 2101</div>
<div class="t" id="teac9798f" style="top:829.15px;font-size:14px;color:#0f0f0e;letter-spacing:0.365px;right:845.37px;">190</div>
<div class="t" id="t63d61538" style="top:829.15px;font-size:14px;color:#0f0f0e;letter-spacing:0.82px;right:592.31px;">18</div>
<div class="t" id="t8f163a6e" style="top:829.15px;font-size:14px;color:#0f0f0e;letter-spacing:0.054px;right:340.45px;">1 656 €</div>
<div class="t" id="t430f92d3" style="top:829.15px;font-size:14px;color:#0f0f0e;letter-spacing:-0.3px;right:88.70px;">9,5 %</div>
<div class="b" style="left:80px;top:863px;width:1280px;height:1px;background:#cdccc5;"></div>
<div class="b" style="left:104px;top:875.1px;width:36px;height:34px;background:#f0f0ec;border-radius:4px;"></div>
<svg class="i" style="left:104px;top:875.1px;width:36px;height:34px;" viewBox="0 0 36 34"><defs><filter id="bl" x="-50%" y="-50%" width="200%" height="200%"><feGaussianBlur stdDeviation="0.45"/></filter><linearGradient id="Ljar2" x1="0" x2="1"><stop offset="0" stop-color="#3a2a3c"/><stop offset=".32" stop-color="#6f5c74"/><stop offset=".6" stop-color="#231726"/><stop offset="1" stop-color="#1a0f1c"/></linearGradient><linearGradient id="Bjar2" x1="0" x2="1"><stop offset="0" stop-color="#3f2a46"/><stop offset=".45" stop-color="#211523"/><stop offset="1" stop-color="#160d17"/></linearGradient></defs><path d="M22 11.8 Q29.6 12.2 29.8 16.5 V25.8 Q29.4 28.9 25 28.6 Q17 28.2 14.5 24.8 Z" fill="#66606c" filter="url(#bl)"/><path d="M9.3 8.5 H26.4 V24 Q17.85 25.4 9.3 24 Z" fill="url(#Bjar2)"/><rect x="9.3" y="8.5" width="17.1" height="5.9" fill="url(#Ljar2)"/><rect x="13.4" y="16" width="5.4" height="1" fill="#e8e4f0" opacity=".85"/><rect x="10.8" y="19" width="9" height=".4" fill="#d8d4e0" opacity=".6"/><rect x="19.5" y="18.2" width="4" height="1.6" fill="#d8d4e0" opacity=".35"/></svg>
<div class="t" id="t67522f77" style="top:876.62px;font-size:12.5px;color:#0f0f0e;-webkit-text-stroke:0.43px currentColor;letter-spacing:-0.053px;left:143.90px;">La Crème</div>
<div class="t" id="t921c97fb" style="top:895.84px;font-size:12px;color:#6b6b65;letter-spacing:-0.034px;left:143.50px;">ID : 2102</div>
<div class="t" id="t1881eaa7" style="top:885.15px;font-size:14px;color:#0f0f0e;letter-spacing:0.365px;right:845.37px;">175</div>
<div class="t" id="t6911c1d3" style="top:885.15px;font-size:14px;color:#0f0f0e;letter-spacing:0.82px;right:592.31px;">16</div>
<div class="t" id="t7bcf92ef" style="top:885.15px;font-size:14px;color:#0f0f0e;letter-spacing:0.054px;right:340.45px;">1 472 €</div>
<div class="t" id="ta04a06b6" style="top:885.15px;font-size:14px;color:#0f0f0e;letter-spacing:-0.3px;right:88.70px;">9,1 %</div>
<div class="b" style="left:80px;top:919px;width:1280px;height:1px;background:#cdccc5;"></div>
<div class="b" style="left:104px;top:931.1px;width:36px;height:34px;background:#f0f0ec;border-radius:4px;"></div>
<svg class="i" style="left:104px;top:931.1px;width:36px;height:34px;" viewBox="0 0 36 34"><defs><filter id="bl" x="-50%" y="-50%" width="200%" height="200%"><feGaussianBlur stdDeviation="0.45"/></filter><linearGradient id="Gt" x1="0" x2="1"><stop offset="0" stop-color="#2a1a2c"/><stop offset=".35" stop-color="#4a3450"/><stop offset="1" stop-color="#1a0e1c"/></linearGradient></defs><path d="M20.6 7.5 H22.2 L20.6 25.5 H19.5Z" fill="#77727c" filter="url(#bl)"/><path d="M14.75 6 H20.85 L19.4 24.8 H16.3Z" fill="url(#Gt)"/><rect x="16.6" y="24.6" width="2.6" height="1.8" fill="#1a1a1e"/><path d="M16.4 26.4 H19.4 L19.6 29.8 H16.8Z" fill="#d6d6dc"/><rect x="15.6" y="7.6" width="3.5" height=".6" fill="#d8d0d8" opacity=".7"/></svg>
<div class="t" id="t59f7fbbc" style="top:932.62px;font-size:12.5px;color:#0f0f0e;-webkit-text-stroke:0.43px currentColor;letter-spacing:0.083px;left:144.10px;">La Crème Contour des Yeux</div>
<div class="t" id="tcbaeb3c3" style="top:951.84px;font-size:12px;color:#6b6b65;letter-spacing:-0.034px;left:143.50px;">ID : 2103</div>
<div class="t" id="t82f64616" style="top:941.15px;font-size:14px;color:#0f0f0e;letter-spacing:0.365px;right:845.37px;">140</div>
<div class="t" id="tc2c084a4" style="top:941.15px;font-size:14px;color:#0f0f0e;letter-spacing:0.82px;right:592.31px;">12</div>
<div class="t" id="tc792dd93" style="top:941.15px;font-size:14px;color:#0f0f0e;letter-spacing:0.125px;right:340.55px;">588 €</div>
<div class="t" id="t8c06d6a0" style="top:941.15px;font-size:14px;color:#0f0f0e;letter-spacing:-0.275px;right:88.75px;">8,6 %</div>
<div class="b" style="left:80px;top:975px;width:1280px;height:1px;background:#cdccc5;"></div>
<div class="b" style="left:104px;top:987.1px;width:36px;height:34px;background:#f0f0ec;border-radius:4px;"></div>
<svg class="i" style="left:104px;top:987.1px;width:36px;height:34px;" viewBox="0 0 36 34"><defs><filter id="bl" x="-50%" y="-50%" width="200%" height="200%"><feGaussianBlur stdDeviation="0.45"/></filter><linearGradient id="Gb" x1="0" x2="1"><stop offset="0" stop-color="#241628"/><stop offset=".4" stop-color="#5a4562"/><stop offset="1" stop-color="#120a14"/></linearGradient></defs><path d="M21 12.5 H23.3 V31.6 Q22 32.4 20.5 31.6Z" fill="#77727c" filter="url(#bl)"/><rect x="16.6" y="1.8" width="2.4" height="2" rx=".5" fill="#2a1b2e"/><rect x="15.8" y="3.2" width="4.4" height="7.8" fill="url(#Gb)"/><rect x="14.4" y="10.9" width="6.8" height="20.2" fill="url(#Gb)"/><rect x="15.2" y="12.6" width="5.2" height=".6" fill="#d8d0d8" opacity=".6"/><path d="M17.3 15.3 L18.3 17.2 L19.2 15.3Z" fill="#c8c0c8" opacity=".6"/></svg>
<div class="t" id="tca9ff5c9" style="top:988.62px;font-size:12.5px;color:#0f0f0e;-webkit-text-stroke:0.43px currentColor;letter-spacing:-0.039px;left:143.95px;">Le Sérum</div>
<div class="t" id="t6e929ebd" style="top:1007.84px;font-size:12px;color:#6b6b65;letter-spacing:-0.097px;left:143.25px;">ID : 2104</div>
<div class="t" id="t4e716b83" style="top:997.15px;font-size:14px;color:#0f0f0e;letter-spacing:0.365px;right:845.37px;">160</div>
<div class="t" id="t87a77058" style="top:997.15px;font-size:14px;color:#0f0f0e;letter-spacing:0.82px;right:592.31px;">14</div>
<div class="t" id="te644c6de" style="top:997.15px;font-size:14px;color:#0f0f0e;letter-spacing:0.054px;right:340.45px;">1 288 €</div>
<div class="t" id="tab952858" style="top:997.15px;font-size:14px;color:#0f0f0e;letter-spacing:-0.3px;right:88.70px;">8,8 %</div>
<div class="b" style="left:80px;top:1031px;width:1280px;height:1px;background:#cdccc5;"></div>
<div class="b" style="left:104px;top:1043.1000000000001px;width:36px;height:34px;background:#f0f0ec;border-radius:4px;"></div>
<svg class="i" style="left:104px;top:1043.1000000000001px;width:36px;height:34px;" viewBox="0 0 36 34"><defs><filter id="bl" x="-50%" y="-50%" width="200%" height="200%"><feGaussianBlur stdDeviation="0.45"/></filter><linearGradient id="Gs" x1="0" x2="1"><stop offset="0" stop-color="#2a1a2c"/><stop offset=".4" stop-color="#4e3a56"/><stop offset="1" stop-color="#140b16"/></linearGradient></defs><path d="M3.6 8.1 H8.3 L7.5 25.2 H4.6Z" fill="url(#Gs)"/><path d="M4.8 25.2 H7.4 L7.6 27.8 H5.2Z" fill="#cfcfd6"/><path d="M20 16.2 Q24.5 16.5 24.8 19 V24.8 Q24 26.8 20 26.4 L15 25.5Z" fill="#6a6470" filter="url(#bl)"/><path d="M12.8 15 H22.8 V24.2 Q17.8 25.2 12.8 24.2Z" fill="url(#Gs)"/><rect x="12.8" y="15" width="10" height="3.4" fill="#3a2a40"/><rect x="15.4" y="19.8" width="3.2" height=".7" fill="#ddd" opacity=".7"/><path d="M32.2 12.5 H33.6 V25.8 Q33 26.6 32 25.6Z" fill="#7a7480" filter="url(#bl)"/><rect x="29.1" y="5.2" width="1.8" height="1.3" fill="#2a1b2e"/><rect x="28.6" y="6.3" width="2.9" height="5.4" fill="url(#Gs)"/><rect x="27.8" y="11.7" width="4.4" height="12.8" fill="url(#Gs)"/><path d="M9.3 17.8 H10.9 M10.1 17 V18.6 M24.8 17.8 H26.4 M25.6 17 V18.6" stroke="#8a84a8" stroke-width=".4"/></svg>
<div class="t" id="tacce0bf2" style="top:1044.62px;font-size:12.5px;color:#0f0f0e;-webkit-text-stroke:0.43px currentColor;letter-spacing:0.166px;left:144.05px;">Routine Anti-Âge Globale</div>
<div class="t" id="t14dde0e4" style="top:1063.84px;font-size:12px;color:#6b6b65;letter-spacing:-0.098px;left:143.75px;">ID : 2105</div>
<div class="t" id="td499e8da" style="top:1053.15px;font-size:14px;color:#0f0f0e;letter-spacing:0.32px;right:845.16px;">95</div>
<div class="t" id="t22bb4e30" style="top:1053.15px;font-size:14px;color:#0f0f0e;letter-spacing:0.82px;right:592.31px;">10</div>
<div class="t" id="t56f9c271" style="top:1053.15px;font-size:14px;color:#0f0f0e;letter-spacing:0.055px;right:340.95px;">2 330 €</div>
<div class="t" id="tfec6e133" style="top:1053.15px;font-size:14px;color:#0f0f0e;letter-spacing:-0.22px;right:88.75px;">10,5 %</div>
<div class="b" style="left:80px;top:1087px;width:1280px;height:1px;background:#cdccc5;"></div>
<div class="t" id="voir" style="top:1106.02px;font-size:12.5px;color:#0f5e4e;-webkit-text-stroke:0.43px currentColor;letter-spacing:0.25px;left:720.25px;transform:translateX(-50%);">Voir plus</div>
</div></body></html>
